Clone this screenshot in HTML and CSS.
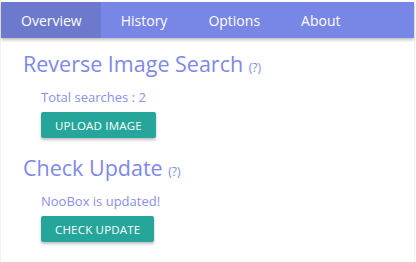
FILE: index.html
```html
<!DOCTYPE html>
<html lang="en">
<head>
    <meta charset="UTF-8">
    <title>NooBox</title>
    <link rel="stylesheet" href="styles.css">
</head>
<body>
    <div class="frame">
        <nav class="tabs">
            <a class="tab active">Overview</a>
            <a class="tab">History</a>
            <a class="tab">Options</a>
            <a class="tab">About</a>
        </nav>

        <div class="section">
            <h2>Reverse Image Search <span class="help">(?)</span></h2>
            <div class="body">
                <p class="note">Total searches : 2</p>
                <button class="btn">Upload Image</button>
            </div>
        </div>

        <div class="section">
            <h2>Check Update <span class="help">(?)</span></h2>
            <div class="body">
                <p class="note">NooBox is updated!</p>
                <button class="btn">Check Update</button>
            </div>
        </div>
    </div>
</body>
</html>
```

FILE: styles.css
```css
body {
    margin: 0;
    font-family: 'Open Sans', 'Noto Sans', sans-serif;
    background: #fff;
}
.frame {
    width: 415px;
    height: 262px;
    padding-top: 2px;
    box-sizing: border-box;
    border-left: 1px solid #f2f2f2;
    border-right: 1px solid #f2f2f2;
}
.tabs {
    display: flex;
    height: 36px;
    background: #7886e6;
    box-shadow: 0 2px 3px rgba(0,0,0,0.25);
}
.tab {
    display: flex;
    align-items: center;
    padding: 0 21px 0 20px;
    color: #fff;
    font-size: 14px;
}
.tab.active {
    padding-right: 19px;
    background: #6c79cc;
}
.section {
    padding-left: 22px;
    padding-bottom: 4px;
}
h2 {
    margin: 11px 0 0;
    font-size: 21.5px;
    font-weight: 400;
    line-height: 30px;
    color: #7e88ea;
}
.help {
    font-size: 12px;
}
.body {
    padding-left: 18px;
}
.note {
    margin: 5px 0 6px;
    font-size: 13px;
    line-height: 18px;
    color: #8a8fe8;
}
.btn {
    height: 26px;
    padding: 0 14px;
    border: none;
    border-radius: 2px;
    background: #26a69a;
    color: #fff;
    font-family: inherit;
    font-size: 11.5px;
    letter-spacing: 0.2px;
    text-transform: uppercase;
    box-shadow: 0 2px 3px rgba(0,0,0,0.25);
}
```
